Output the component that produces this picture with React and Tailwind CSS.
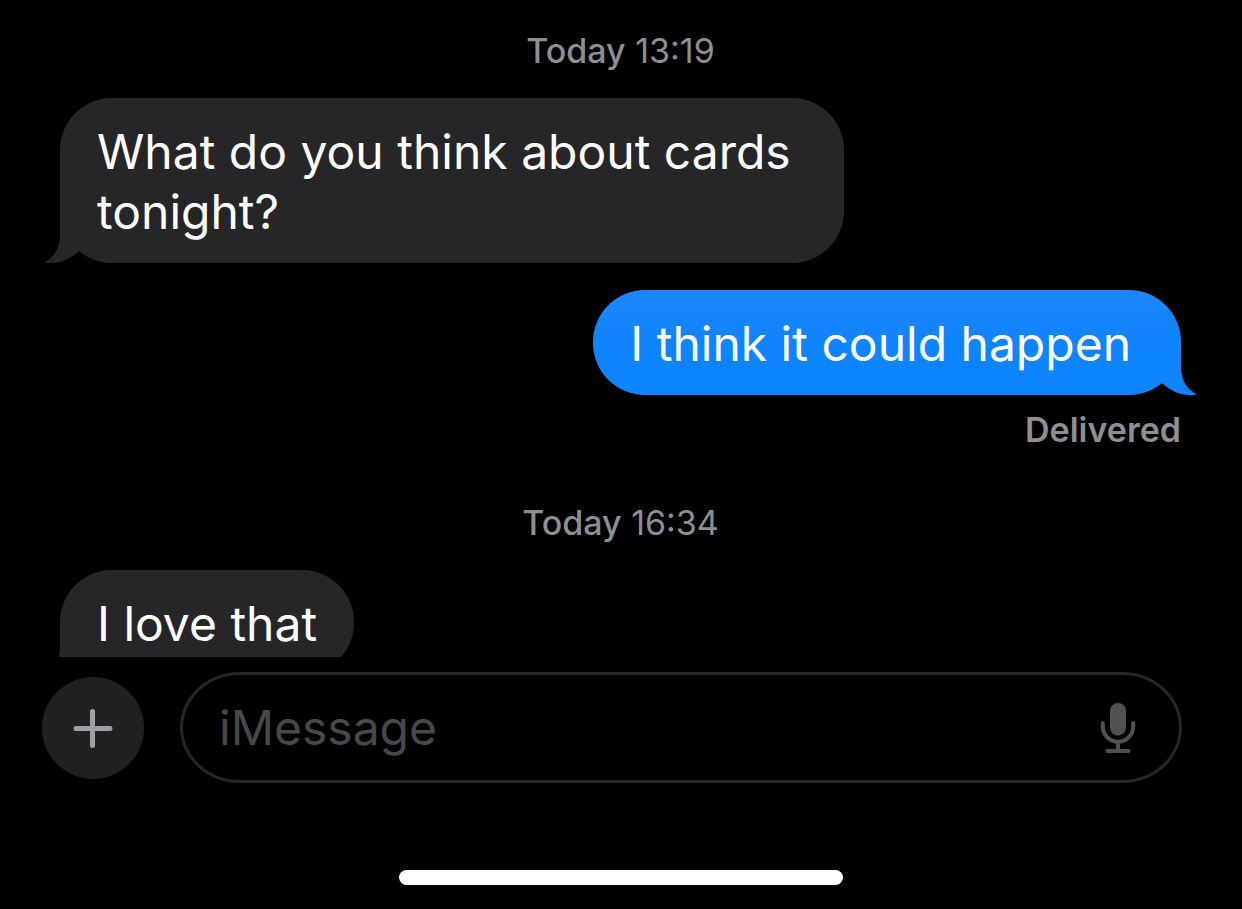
import React from 'react';
import clsx from 'clsx';

const thread = [
  { type: 'time', day: 'Today', time: '13:19' },
  { type: 'received', text: 'What do you think about cards tonight?' },
  { type: 'sent', text: 'I think it could happen', status: 'Delivered' },
  { type: 'time', day: 'Today', time: '16:34' },
  { type: 'received', text: 'I love that' }
];

const Tail = ({ sent }) => (
  <svg
    viewBox="0 0 40 54"
    aria-hidden="true"
    className={clsx(
      'absolute bottom-0 h-[54px] w-10',
      sent ? '-right-4 -scale-x-100 text-[#0f84ff]' : '-left-4 text-[#262628]'
    )}
  >
    <path
      fill="currentColor"
      d="M16 0V26C16 39 10 49 0 53.4C12 55.5 24 52 35 42.2L38 30Z"
    />
  </svg>
);

const Timestamp = ({ day, time }) => (
  <div className="mb-[27px] text-center text-[34px] leading-10 text-[#8e8e93]">
    <span className="font-medium">{day}</span> {time}
  </div>
);

const Bubble = ({ text, sent, status }) => (
  <div className={clsx('flex flex-col', sent ? 'items-end' : 'items-start')}>
    <div
      className={clsx(
        'relative max-w-[784px] rounded-[52px] pt-6 pb-[21px] pl-[37px] text-5xl leading-[60px] text-white',
        sent ? 'bg-linear-to-b from-[#1c87ff] to-[#0f84ff] to-50% pr-[50px]' : 'bg-[#262628] pr-[37px]'
      )}
    >
      <Tail sent={sent} />
      <p className="relative">{text}</p>
    </div>
    {status && (
      <div className="mt-[15px] text-[34px] leading-10 font-semibold text-[#8e8e93]">{status}</div>
    )}
  </div>
);

const MicIcon = () => (
  <svg viewBox="0 0 36 50" fill="none" aria-hidden="true" className="h-[50px] w-9">
    <rect x="10" y="0" width="16" height="32.5" rx="8" fill="currentColor" />
    <path
      d="M2.8 20v3.5a15.2 15.2 0 0 0 30.4 0V20M18 39V48M7.5 48h21"
      stroke="currentColor"
      strokeWidth="4"
      strokeLinecap="round"
    />
  </svg>
);

const App = () => {
  return (
    <div className="flex h-screen flex-col bg-black font-['Inter',sans-serif]">
      {/* Messages */}
      <main className="min-h-0 flex-1 overflow-hidden pt-[31px] pr-[61px] pl-[60px]">
        {thread.map((item, index) => {
          if (item.type === 'time') {
            return (
              <div key={index} className={index > 0 ? 'mt-[53px]' : ''}>
                <Timestamp day={item.day} time={item.time} />
              </div>
            );
          }
          const sent = item.type === 'sent';
          return (
            <div key={index} className={sent ? 'mt-[27px]' : ''}>
              <Bubble text={item.text} sent={sent} status={item.status} />
            </div>
          );
        })}
      </main>

      {/* Composer */}
      <footer className="flex shrink-0 flex-col pt-[15px] pb-6">
        <div className="flex items-center gap-9 pr-[60px] pl-[42px]">
          <button
            type="button"
            aria-label="Add attachment"
            className="flex size-[102px] shrink-0 items-center justify-center rounded-full bg-[#212123] text-[#a0a0a4]"
          >
            <svg viewBox="0 0 40 40" fill="none" aria-hidden="true" className="size-10">
              <path
                d="M19.5 3.5v34M3 20.5h34"
                stroke="currentColor"
                strokeWidth="5"
                strokeLinecap="round"
              />
            </svg>
          </button>

          <div className="flex h-[111px] min-w-0 flex-1 items-center rounded-[60px/56px] border-3 border-[#262627] pr-[43px] pl-9">
            <input
              type="text"
              aria-label="Message"
              placeholder="iMessage"
              className="min-w-0 flex-1 bg-transparent text-5xl leading-[60px] text-white outline-none placeholder:text-[#48484a]"
            />
            <button type="button" aria-label="Record audio" className="shrink-0 text-[#515154]">
              <MicIcon />
            </button>
          </div>
        </div>

        {/* Home indicator */}
        <div className="mx-auto mt-[87px] h-[15px] w-[444px] rounded-full bg-white" />
      </footer>
    </div>
  );
};

export default App;
